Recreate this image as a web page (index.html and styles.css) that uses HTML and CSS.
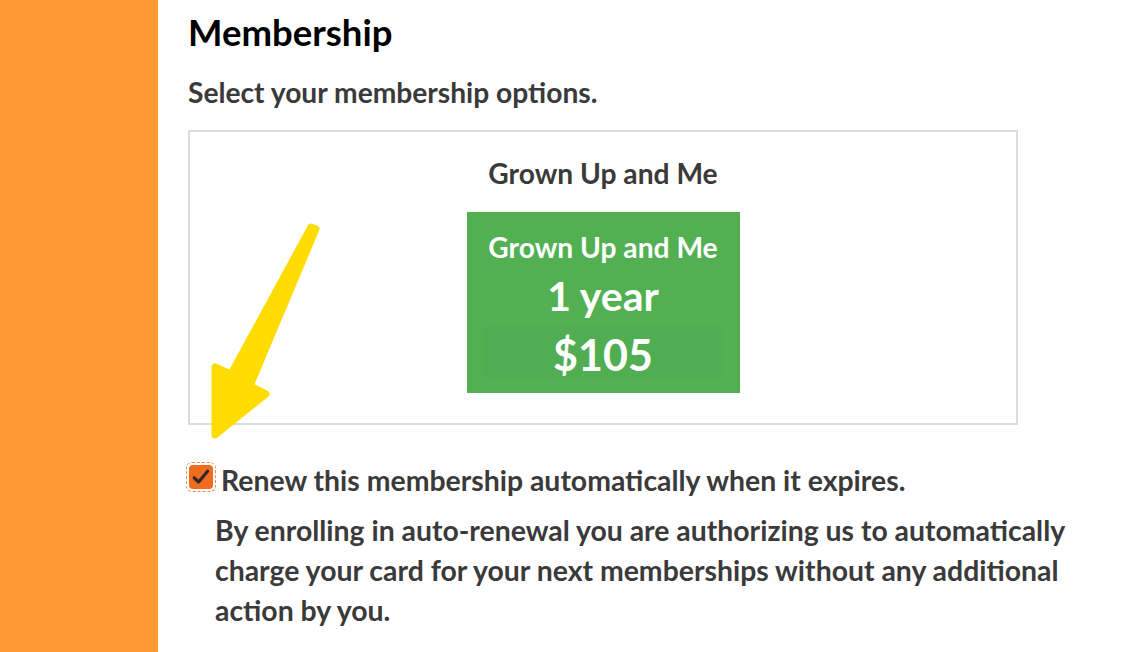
FILE: index.html
```html
<!DOCTYPE html>
<html>
<head>
<meta charset="utf-8">
<link rel="stylesheet" href="styles.css">
</head>
<body>
<div class="page">
  <aside class="sidebar"></aside>
  <main class="content">
    <h1 class="title">Membership</h1>
    <p class="subtitle">Select your membership options.</p>
    <div class="options">
      <div class="option-name">Grown Up and Me</div>
      <div class="card">
        <div class="card-name">Grown Up and Me</div>
        <div class="card-term">1 year</div>
        <div class="card-price">$105</div>
      </div>
    </div>
    <label class="renew">
      <span class="checkbox">
        <svg viewBox="0 0 20 20" width="20" height="20"><path d="M3.2 10.8 L7.6 15 L16.6 4.2" fill="none" stroke="#2b2b2b" stroke-width="3.2" stroke-linecap="round" stroke-linejoin="round"/></svg>
      </span>
      <span class="renew-text">Renew this membership automatically when it expires.</span>
    </label>
    <p class="note">By enrolling in auto-renewal you are authorizing us to automatically charge your card for your next memberships without any additional action by you.</p>
    <svg class="arrow" viewBox="0 0 150 240" width="150" height="240">
      <path d="M131 17 L51 164 L35 157 L35 225 L86 184 L70 176 L136 19 Z" fill="#ffdc00" stroke="#ffdc00" stroke-width="7" stroke-linejoin="round"/>
    </svg>
  </main>
</div>
</body>
</html>
```
FILE: styles.css
```css
* { box-sizing: border-box; }
html, body { margin: 0; padding: 0; background: #fff; }
body { font-family: Lato, "Open Sans", sans-serif; font-weight: 700; color: #3a3a3a; }
.page { display: flex; width: 1130px; height: 652px; overflow: hidden; }
.sidebar { width: 158px; flex: none; background: #ff9a33; }
.content { position: relative; flex: 1; padding: 10px 0 0 30px; }
.title { margin: 0; font-size: 36.5px; line-height: 44px; color: #000; font-weight: 700; }
.subtitle { margin: 21px 0 0; font-size: 28.2px; line-height: 34px; }
.options { margin-top: 21px; width: 830px; height: 295px; border: 2px solid #dcdcdc; display: flex; flex-direction: column; align-items: center; padding-top: 24px; }
.option-name { font-size: 28.2px; line-height: 34px; }
.card { margin-top: 22px; width: 273px; height: 181px; background: #52b052; color: #fff; display: flex; flex-direction: column; align-items: center; padding-top: 17px; }
.card-name { font-size: 28.2px; line-height: 36px; }
.card-term { font-size: 41px; line-height: 48px; margin-top: 7px; }
.card-price { margin-top: 5px; width: 238px; height: 53px; background: #51ad51; font-size: 43px; line-height: 60px; text-align: center; }
.renew { display: flex; align-items: center; margin-top: 38px; margin-left: 1px; }
.checkbox { position: relative; width: 24px; height: 24px; margin-bottom: 7px; background: #f26c1f; border-radius: 4px; display: flex; align-items: center; justify-content: center; flex: none; }
.checkbox::before { content: ""; position: absolute; left: -3px; top: -3px; right: -3px; bottom: -3px; border: 1px dashed #f58a4a; border-radius: 6px; }
.renew-text { margin-left: 8px; font-size: 28.4px; line-height: 34px; }
.note { margin: 13px 0 0 27px; width: 870px; font-size: 28.4px; line-height: 40px; }
.arrow { position: absolute; left: 22px; top: 210px; }
```
